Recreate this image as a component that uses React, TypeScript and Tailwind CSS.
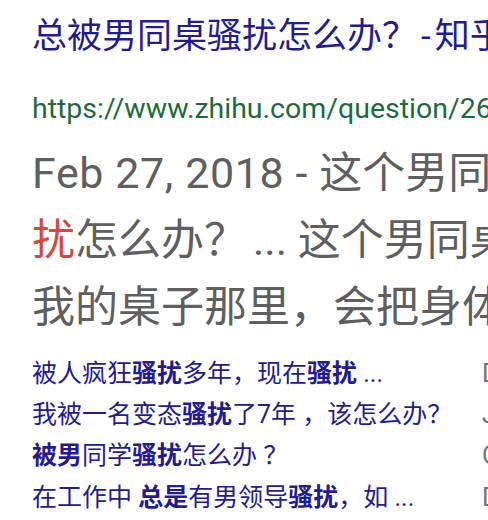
const FONT = { fontFamily: 'Roboto, "Noto Sans CJK SC", sans-serif' };

const SITELINKS: { parts: [string, boolean][]; date: string }[] = [
  {
    parts: [
      ['被人疯狂', false],
      ['骚扰', true],
      ['多年，现在', false],
      ['骚扰', true],
      [' ...', false],
    ],
    date: 'Dec 14, 2018',
  },
  {
    parts: [
      ['我被一名变态', false],
      ['骚扰', true],
      ['了7年 ，该怎么办？', false],
    ],
    date: 'Jul 3, 2017',
  },
  {
    parts: [
      ['被男', true],
      ['同学', false],
      ['骚扰', true],
      ['怎么办 ？', false],
    ],
    date: 'Oct 9, 2016',
  },
  {
    parts: [
      ['在工作中 ', false],
      ['总是', true],
      ['有男领导', false],
      ['骚扰', true],
      ['，如 ...', false],
    ],
    date: 'Dec 2, 2017',
  },
];

export default function App() {
  return (
    <div className="h-[520px] w-[488px] overflow-hidden bg-white" style={FONT}>
      <div className="w-[900px] pl-[32px]">
        <div className="flex h-[75px] items-center whitespace-nowrap text-[35px] text-[#231b8f]">
          <span>总被男同桌骚扰怎么办？</span>
          <span className="ml-[4px]">-</span>
          <span className="ml-[4px]">知乎</span>
        </div>
        <div className="h-[65px] whitespace-nowrap text-[28.5px] leading-[68px] text-[#1d6b3b]">
          https://www.zhihu.com/question/26813729
        </div>
        <div className="whitespace-nowrap text-[43px] leading-[67px] text-[#5f5f5f]">
          <div>
            <span className="tracking-[0.6px]">Feb 27, 2018 - </span>这个男同桌
            <span className="text-[#d9463a]">骚</span>
          </div>
          <div>
            <span className="text-[#d9463a]">扰</span>怎么办？
            <span className="ml-[6px]">... 这个男同桌总是</span>
          </div>
          <div>我的桌子那里，会把身体靠过来</div>
        </div>
        <div className="mt-[12px] flex flex-col">
          {SITELINKS.map((row, i) => (
            <div key={i} className="flex h-[41.3px] items-center whitespace-nowrap text-[25px]">
              <div className="w-[450px] text-[#231b8f]">
                {row.parts.map(([t, b], j) => (
                  <span key={j} className={b ? 'font-bold' : ''}>
                    {t}
                  </span>
                ))}
              </div>
              <div className="text-[#70757a]">{row.date}</div>
            </div>
          ))}
        </div>
      </div>
    </div>
  );
}
